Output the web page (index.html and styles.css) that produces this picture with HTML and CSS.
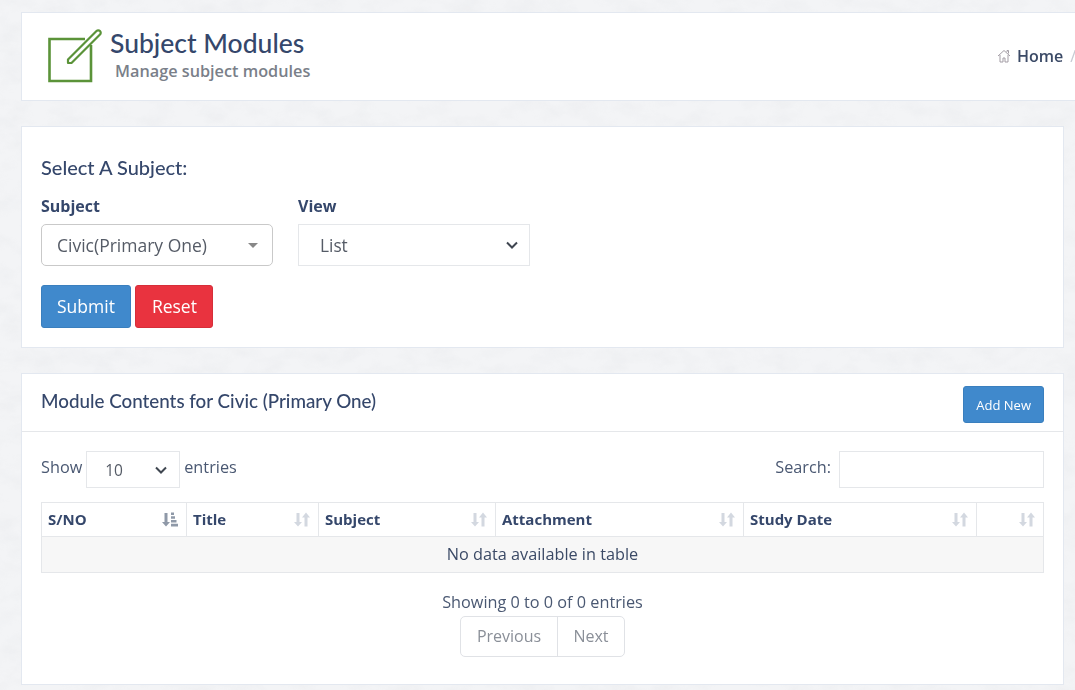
FILE: index.html
```html
<!DOCTYPE html>
<html lang="en">
<head>
<meta charset="utf-8">
<title>Subject Modules</title>
<link rel="stylesheet" href="styles.css">
</head>
<body>
<svg class="texture" aria-hidden="true">
  <filter id="paper"><feTurbulence type="fractalNoise" baseFrequency="0.035 0.06" numOctaves="4" seed="7"/><feColorMatrix values="0 0 0 0 0.55  0 0 0 0 0.57  0 0 0 0 0.6  0.5 0 0 0 -0.2"/></filter>
  <rect width="100%" height="100%" filter="url(#paper)"/>
</svg>
<main class="page">
  <header class="card page-head">
    <div class="head-left">
      <svg class="head-icon" width="56" height="56" viewBox="0 0 56 56" fill="none">
        <path d="M37 11H1.500V53H43V17" stroke="#5b9339" stroke-width="2.600"/>
        <path d="M20 31.500L48.500 3a2.300 2.300 0 0 1 3.500 3.500L23.500 35H20Z" stroke="#5b9339" stroke-width="2.200" fill="#fff" stroke-linejoin="round"/>
      </svg>
      <div class="head-text">
        <h1>Subject Modules</h1>
        <p>Manage subject modules</p>
      </div>
    </div>
    <nav class="crumbs">
      <svg width="14" height="14" viewBox="0 0 14 14" fill="none" stroke="#a39da5" stroke-width="1">
        <path d="M1 7L7 1.500L13 7"/>
        <path d="M3 6V13H6V9H8V13H11V6"/>
        <path d="M10 3V1.500H11.500V4.500"/>
      </svg>
      <a>Home</a><span class="sep">/</span>
    </nav>
  </header>

  <section class="card filter">
    <h2>Select A Subject:</h2>
    <div class="fields">
      <div class="field">
        <label>Subject</label>
        <div class="fake-select"><span>Civic(Primary One)</span><i class="caret"></i></div>
      </div>
      <div class="field">
        <label>View</label>
        <div class="native"><span>List</span>
          <svg width="12" height="8" viewBox="0 0 12 8" fill="none" stroke="#3f4650" stroke-width="2"><path d="M1 1.500L6 6.500L11 1.500"/></svg>
        </div>
      </div>
    </div>
    <div class="actions">
      <button class="btn blue">Submit</button>
      <button class="btn red">Reset</button>
    </div>
  </section>

  <section class="card list">
    <div class="list-head">
      <h3>Module Contents for Civic (Primary One)</h3>
      <button class="btn blue small">Add New</button>
    </div>
    <div class="list-body">
      <div class="tools">
        <div class="len">Show
          <div class="native short"><span>10</span>
            <svg width="12" height="8" viewBox="0 0 12 8" fill="none" stroke="#3f4650" stroke-width="2"><path d="M1 1.500L6 6.500L11 1.500"/></svg>
          </div>
          entries</div>
        <div class="search">Search: <div class="search-box"></div></div>
      </div>
      <table>
        <colgroup>
          <col class="c1"><col class="c2"><col class="c3"><col class="c4"><col class="c5"><col class="c6">
        </colgroup>
        <thead>
          <tr>
            <th><div class="th"><span>S/NO</span><svg width="16" height="15" viewBox="0 0 16 15" fill="#8f99a8"><path d="M2.500 1h3v9H8l-4 4.500L0 10h2.500z"/><path d="M9 .5h3v2.500H9zM9 4.200h4v2.500H9zM9 8h5.500v2.500H9zM9 11.800h7v2.700H9z"/></svg></div></th>
            <th><div class="th"><span>Title</span><svg class="sort" width="16" height="15" viewBox="0 0 16 15" fill="#d3d8e0"><path d="M2.500 1h3v9H8l-4 4.500L0 10h2.500z"/><path d="M10.500 14.500h3V5.500H16L12 .5 8 5.500h2.500z"/></svg></div></th>
            <th><div class="th"><span>Subject</span><svg class="sort" width="16" height="15" viewBox="0 0 16 15" fill="#d3d8e0"><path d="M2.500 1h3v9H8l-4 4.500L0 10h2.500z"/><path d="M10.500 14.500h3V5.500H16L12 .5 8 5.500h2.500z"/></svg></div></th>
            <th><div class="th"><span>Attachment</span><svg class="sort" width="16" height="15" viewBox="0 0 16 15" fill="#d3d8e0"><path d="M2.500 1h3v9H8l-4 4.500L0 10h2.500z"/><path d="M10.500 14.500h3V5.500H16L12 .5 8 5.500h2.500z"/></svg></div></th>
            <th><div class="th"><span>Study Date</span><svg class="sort" width="16" height="15" viewBox="0 0 16 15" fill="#d3d8e0"><path d="M2.500 1h3v9H8l-4 4.500L0 10h2.500z"/><path d="M10.500 14.500h3V5.500H16L12 .5 8 5.500h2.500z"/></svg></div></th>
            <th><div class="th end"><svg class="sort" width="16" height="15" viewBox="0 0 16 15" fill="#d3d8e0"><path d="M2.500 1h3v9H8l-4 4.500L0 10h2.500z"/><path d="M10.500 14.500h3V5.500H16L12 .5 8 5.500h2.500z"/></svg></div></th>
          </tr>
        </thead>
        <tbody>
          <tr><td colspan="6">No data available in table</td></tr>
        </tbody>
      </table>
      <div class="info">Showing 0 to 0 of 0 entries</div>
      <div class="pager"><a>Previous</a><a>Next</a></div>
    </div>
  </section>
</main>
</body>
</html>
```

FILE: styles.css
```css
* { box-sizing: border-box; }
html, body { margin: 0; height: 100%; overflow: hidden; }
body {
  background: #f3f4f6;
  font-family: "Open Sans", "Noto Sans", sans-serif;
  font-size: 16px;
  color: #3b4a66;
}
.texture { position: fixed; inset: 0; width: 100%; height: 100%; opacity: 0.35; }
.page { position: relative; padding: 12px 11px 0 21px; display: flex; flex-direction: column; gap: 25px; }
.card { background: #fff; border: 1px solid #e3e8f0; }

.page-head {
  height: 89px;
  margin-right: -40px;
  display: flex;
  justify-content: space-between;
  align-items: center;
  border-right: 0;
}
.head-left { display: flex; align-items: flex-start; padding-left: 26px; }
.head-icon { margin-top: -1px; }
.head-text { margin-left: 6px; margin-top: -3px; }
h1 { margin: 0; font: 500 26.500px/34px Lato, sans-serif; color: #35476b; }
.head-text p { margin: 0 0 0 5px; font-size: 16.250px; line-height: 22px; font-weight: 600; color: #7a7f89; }
.crumbs { display: flex; align-items: center; gap: 6px; width: 107px; font-size: 16px; font-weight: 600; flex: none; white-space: nowrap; margin-top: -2px; }
.crumbs a { color: #3b4a66; }
.sep { color: #c6cad2; margin-left: 1px; font-weight: 400; }

.filter { height: 222px; padding: 27px 19px 0; }
h2 { margin: 0; font: 500 20px/26px Lato, sans-serif; color: #35476b; }
.fields { display: flex; gap: 25px; margin-top: 14px; }
.field { width: 232px; }
label { display: block; font-size: 16px; line-height: 24px; font-weight: 700; color: #35476b; margin-bottom: 6px; }
.fake-select {
  height: 42px; border: 1px solid #c9c9c9; border-radius: 5px; padding: 0 14px 0 15px;
  display: flex; justify-content: space-between; align-items: center; color: #555b66; font-size: 17.500px;
}
.caret { border: 5.500px solid transparent; border-top: 5px solid #888; border-bottom: 0; }
.native {
  height: 42px; border: 1px solid #e5e7ea; padding: 0 11px 0 21px;
  display: flex; justify-content: space-between; align-items: center; color: #555b66; font-size: 17.300px;
}
.actions { display: flex; gap: 4px; margin-top: 19px; }
.btn {
  font-family: inherit; font-size: 17.500px; color: #fff; height: 43px; padding: 0 15px 2px;
  border-radius: 3px; border: 1px solid transparent;
}
.blue { background: #4089cc; border-color: #3a7fbe; }
.red { background: #e9333f; border-color: #d62e39; padding: 0 15px 2px 16px; }
.small { font-size: 13px; height: 37px; padding: 0 12px; }

.list { height: 312px; }
.list-head {
  height: 58px; padding: 4px 19px 0; display: flex; justify-content: space-between; align-items: center;
  border-bottom: 1px solid #e5e7ea;
}
h3 { margin: -8px 0 0; font: 500 18.800px/24px Lato, sans-serif; color: #35476b; }
.list-body { padding: 19px 19px 0; }
.tools { display: flex; justify-content: space-between; height: 37px; font-size: 16.250px; line-height: 33px; color: #4a5872; }
.len, .search { display: flex; align-items: flex-start; }
.search { gap: 8px; }
.short { width: 94px; height: 37px; padding: 2px 12px 0 18px; font-size: 15.500px; }
.short svg { margin-top: -2px; }
.len { gap: 4px; }
.search-box { width: 205px; height: 37px; border: 1px solid #e5e7ea; }

table { width: calc(100% - 1px); table-layout: fixed; border-collapse: collapse; margin-top: 14px; font-size: 16.250px; }
.c1 { width: 145px; } .c2 { width: 132px; } .c3 { width: 177px; } .c4 { width: 248px; } .c5 { width: 233px; } .c6 { width: 67px; }
th, td { border: 1px solid #e5e7ea; }
th { height: 34px; padding: 0 8px 0 6px; text-align: left; font-weight: 700; font-size: 15px; color: #35476b; }
.th { display: flex; justify-content: space-between; align-items: center; }
.th span { padding-bottom: 2px; }
.end { justify-content: flex-end; }
td { height: 36px; text-align: center; background: #f7f7f7; color: #3b4a66; padding: 0 0 2px; }

.info { text-align: center; font-size: 16.250px; line-height: 22px; margin-top: 18px; color: #4a5872; }
.pager {
  display: flex; width: 165px; height: 41px; margin: 3px auto 0; border: 1px solid #e0e2e6; border-radius: 5px;
  color: #8a8f98; font-size: 16px;
}
.pager a { display: flex; align-items: center; justify-content: center; padding-bottom: 2px; }
.pager a:first-child { width: 97px; border-right: 1px solid #e0e2e6; }
.pager a:last-child { flex: 1; }
```
